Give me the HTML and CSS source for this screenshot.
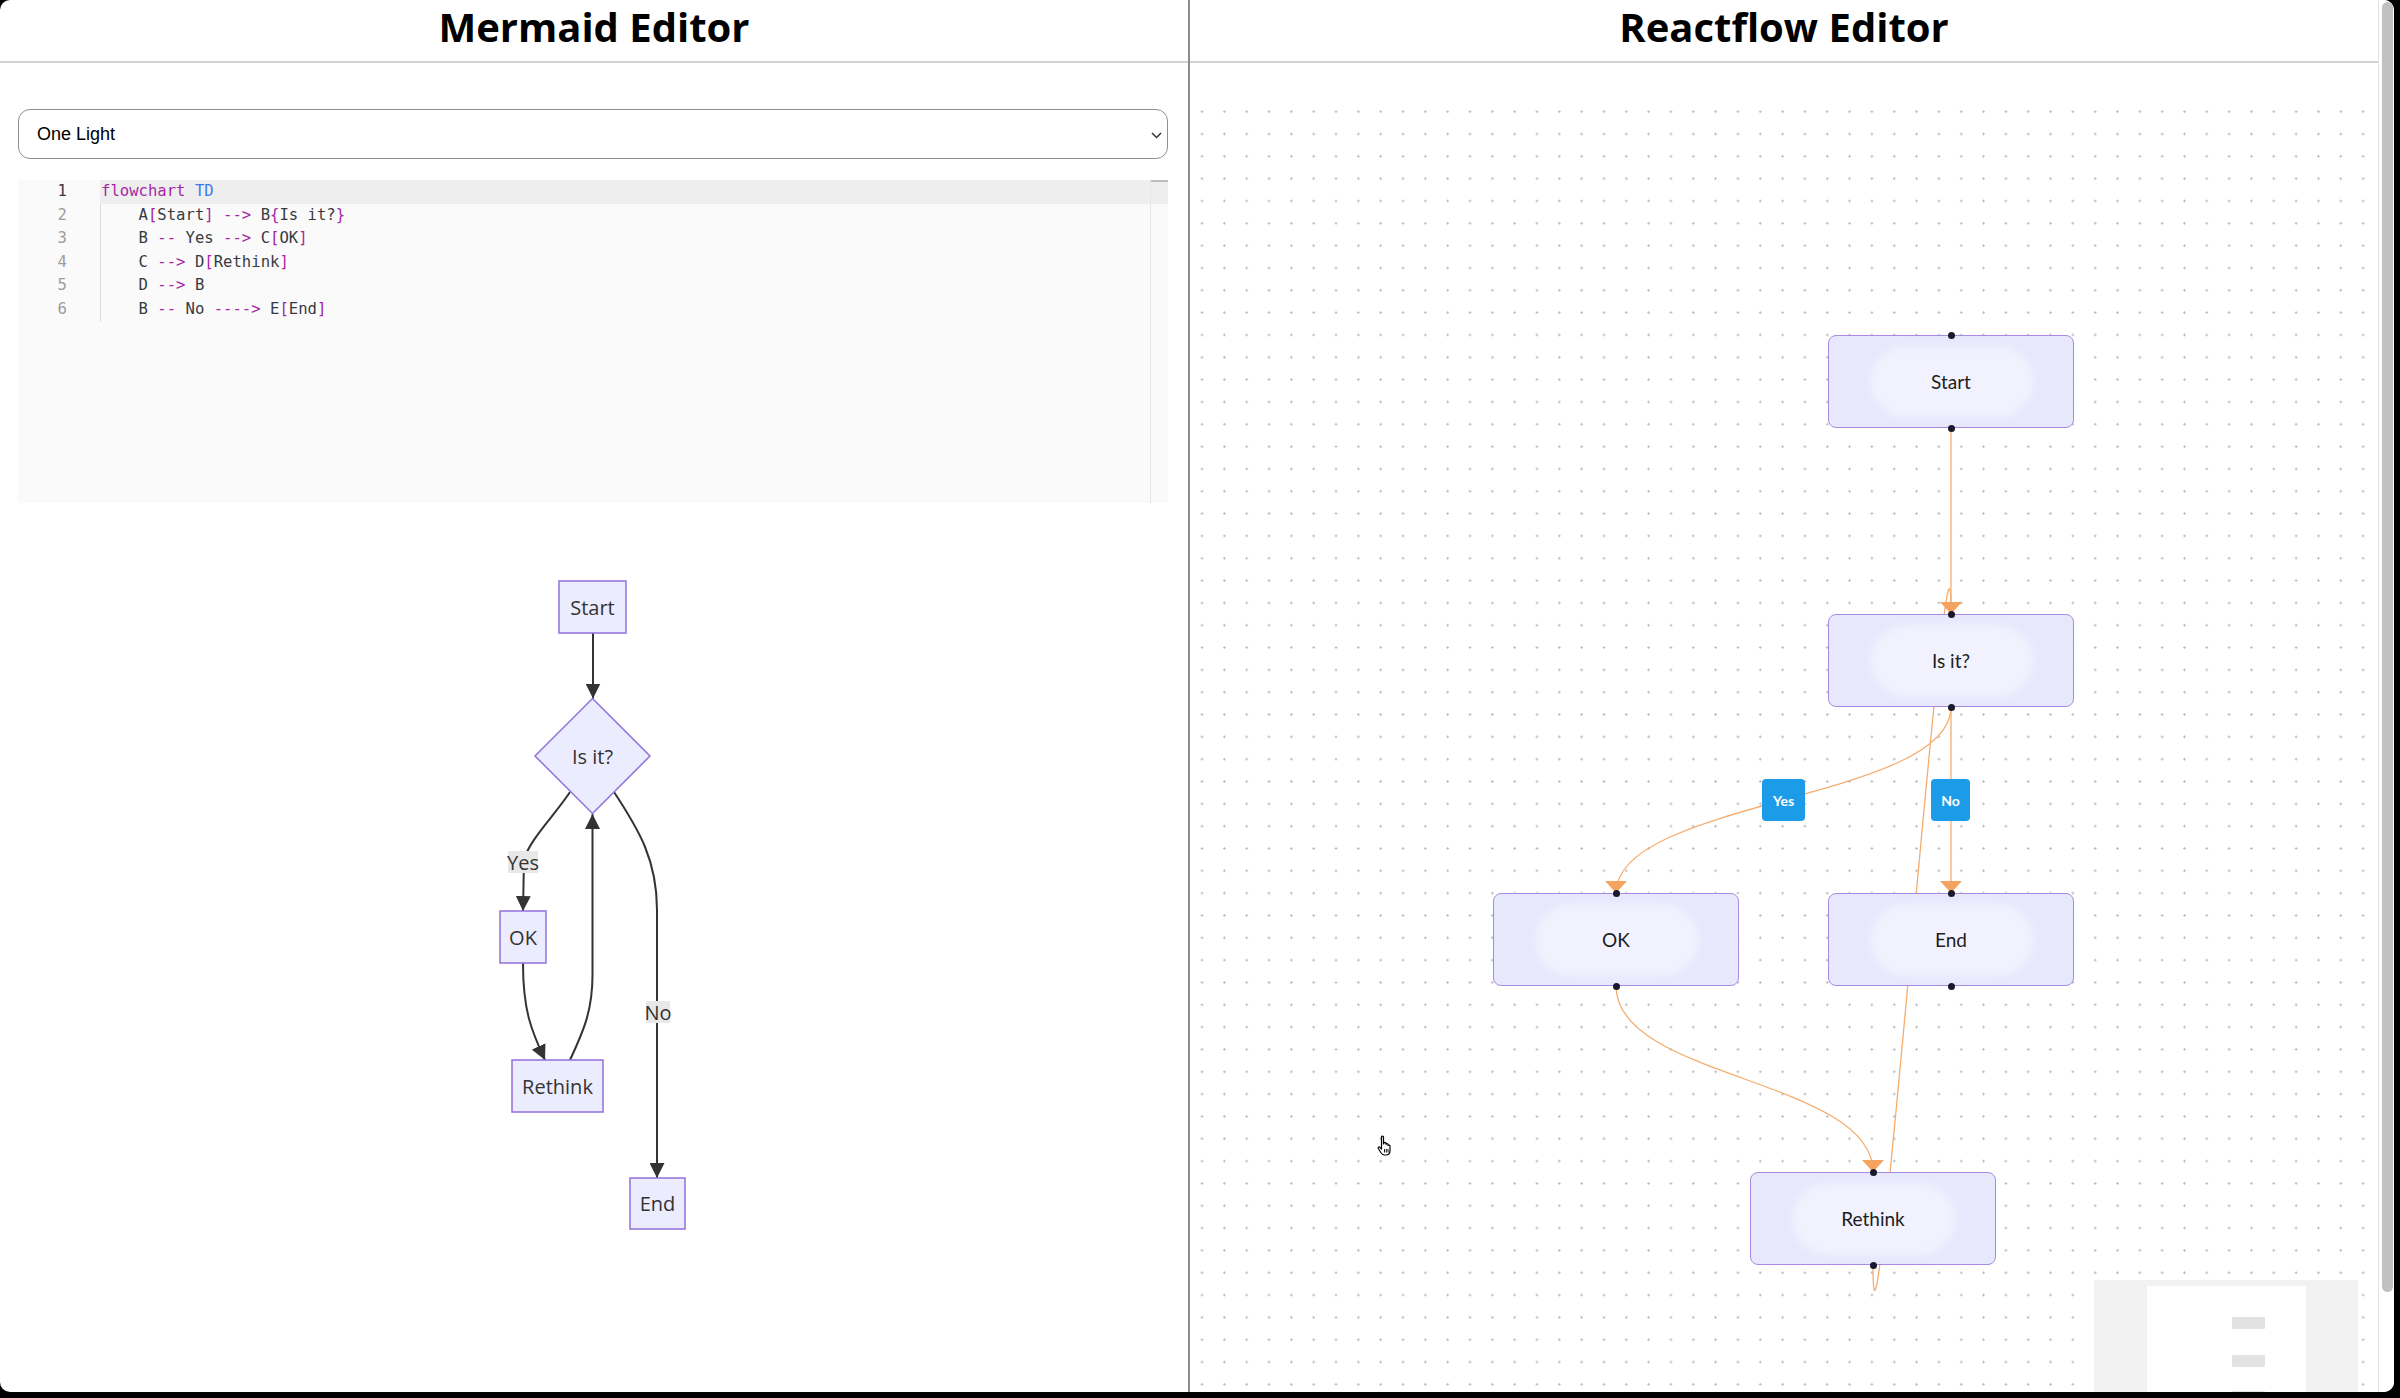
FILE: index.html
```html
<!DOCTYPE html>
<html lang="en">
<head>
  <meta charset="UTF-8">
  <title>Mermaid / Reactflow Editor</title>
  <link rel="stylesheet" href="styles.css">
</head>
<body>

  <div class="window">
    <div class="app">

      <section class="panel panel-left">
        <header class="panel-header"><h1>Mermaid Editor</h1></header>
        <div class="panel-body">
          <div class="theme-select">
            <span>One Light</span>
            <svg class="chevron" width="11" height="7" viewBox="0 0 11 7"><path d="M1 1 L5.5 5.5 L10 1" fill="none" stroke="#333" stroke-width="1.5"/></svg>
          </div>

          <div class="code-editor">
            <div class="gutter">
              <div class="ln active">1</div>
              <div class="ln">2</div>
              <div class="ln">3</div>
              <div class="ln">4</div>
              <div class="ln">5</div>
              <div class="ln">6</div>
            </div>
            <div class="code">
              <div class="line active"><span class="kw">flowchart</span> <span class="dir">TD</span></div>
              <div class="line indented">    A<span class="op">[</span>Start<span class="op">]</span> <span class="op">--&gt;</span> B<span class="op">{</span>Is it?<span class="op">}</span></div>
              <div class="line indented">    B <span class="op">--</span> Yes <span class="op">--&gt;</span> C<span class="op">[</span>OK<span class="op">]</span></div>
              <div class="line indented">    C <span class="op">--&gt;</span> D<span class="op">[</span>Rethink<span class="op">]</span></div>
              <div class="line indented">    D <span class="op">--&gt;</span> B</div>
              <div class="line indented">    B <span class="op">--</span> No <span class="op">----&gt;</span> E<span class="op">[</span>End<span class="op">]</span></div>
            </div>
            <div class="editor-scroll"><div class="editor-thumb"></div></div>
          </div>

          <svg class="mermaid-diagram" width="240" height="690" viewBox="474 560 240 690">
            <defs>
              <marker id="m-arrow" viewBox="0 0 10 10" refX="10" refY="5" markerUnits="userSpaceOnUse" markerWidth="15" markerHeight="15" orient="auto">
                <path d="M0,0 L10,5 L0,10 z" fill="#333"/>
              </marker>
            </defs>
            <g class="m-edges">
              <path d="M594,633 L594,698.5" marker-end="url(#m-arrow)"/>
              <path d="M571,792 C556,815 530,840 525,860 L524,911" marker-end="url(#m-arrow)"/>
              <path d="M524,963 C524,1010 532,1030 546,1060" marker-end="url(#m-arrow)"/>
              <path d="M571,1060 C585,1030 593.5,1010 593.5,975 L593.5,814" marker-end="url(#m-arrow)"/>
              <path d="M615,792 C640,830 658,860 658,910 L658,1178" marker-end="url(#m-arrow)"/>
            </g>
            <g class="m-labels">
              <rect x="509" y="851" width="30" height="22"/>
              <text x="524" y="862">Yes</text>
              <rect x="647" y="1001" width="24" height="22"/>
              <text x="659" y="1012">No</text>
            </g>
            <g class="m-nodes">
              <rect x="560" y="581" width="67" height="52"/>
              <text x="593.5" y="607">Start</text>
              <polygon points="593.5,698.5 651,756 593.5,813.5 536,756"/>
              <text x="593.5" y="756">Is it?</text>
              <rect x="501" y="911" width="46" height="52"/>
              <text x="524" y="937">OK</text>
              <rect x="513" y="1060" width="91" height="52"/>
              <text x="558.5" y="1086">Rethink</text>
              <rect x="631" y="1178" width="55" height="51"/>
              <text x="658.5" y="1203.5">End</text>
            </g>
          </svg>
        </div>
      </section>

      <section class="panel panel-right">
        <header class="panel-header"><h1>Reactflow Editor</h1></header>
        <div class="flow-canvas">
          <svg class="flow-edges" width="1188" height="1292">
            <path d="M761,328 L761,514"/>
            <path d="M761,607 C761,700 426,700 426,793"/>
            <path d="M761,607 L761,793"/>
            <path d="M426,886 C426,979 683,979 683,1072"/>
            <path d="M683,1165 C683,1365 761,314 761,514"/>
            <g class="flow-arrows">
              <polygon points="750,502 772,502 761,514"/>
              <polygon points="415,781 437,781 426,793"/>
              <polygon points="750,781 772,781 761,793"/>
              <polygon points="672,1060 694,1060 683,1072"/>
            </g>
          </svg>

          <div class="rf-node" style="left: 638px; top: 235px;">
            <div class="glow"></div><span>Start</span>
            <div class="handle top"></div><div class="handle bottom"></div>
          </div>
          <div class="rf-node" style="left: 638px; top: 514px;">
            <div class="glow"></div><span>Is it?</span>
            <div class="handle top"></div><div class="handle bottom"></div>
          </div>
          <div class="rf-node" style="left: 303px; top: 793px;">
            <div class="glow"></div><span>OK</span>
            <div class="handle top"></div><div class="handle bottom"></div>
          </div>
          <div class="rf-node" style="left: 638px; top: 793px;">
            <div class="glow"></div><span>End</span>
            <div class="handle top"></div><div class="handle bottom"></div>
          </div>
          <div class="rf-node" style="left: 560px; top: 1072px;">
            <div class="glow"></div><span>Rethink</span>
            <div class="handle top"></div><div class="handle bottom"></div>
          </div>

          <div class="edge-label" style="left: 572px; top: 679px; width: 43px;">Yes</div>
          <div class="edge-label" style="left: 741px; top: 679px; width: 39px;">No</div>

          <svg class="cursor" width="19" height="21" viewBox="0 0 19 21">
            <path d="M5.5 2 C5.5 0.8 7.5 0.8 7.5 2 L7.5 9 L8 8.2 C8.3 7 10 7 10 8.2 L10 9.3 C10.3 8.4 12 8.4 12 9.6 L12 10.5 C12.4 9.8 14 9.9 14 11 L14 15.5 C14 18 12.5 20 10 20 L8.5 20 C6.8 20 5.8 19 4.8 17.5 L2.3 13.5 C1.6 12.4 3 11.3 4 12.3 L5.5 14 Z" fill="#fff" stroke="#000" stroke-width="1.2" stroke-linejoin="round"/>
            <path d="M8.5 14 V17.5 M10.3 14 V17.5 M12 14 V17.5" stroke="#000" stroke-width="0.9"/>
          </svg>

          <div class="minimap">
            <svg width="264" height="150">
              <rect class="mm-view" x="53" y="6" width="159" height="200"/>
              <rect class="mm-node" x="138" y="37" width="33" height="12" rx="1"/>
              <rect class="mm-node" x="138" y="75" width="33" height="12" rx="1"/>
              <rect class="mm-node" x="138" y="111" width="33" height="12" rx="1"/>
            </svg>
          </div>
        </div>
      </section>

    </div>
    <div class="page-scrollbar"><div class="page-thumb"></div></div>
  </div>

</body>
</html>
```

FILE: styles.css
```css
* {
  box-sizing: border-box;
}

html, body {
  margin: 0;
  background: #000;
}

body {
  width: 2400px;
  height: 1398px;
  overflow: hidden;
}

.window {
  width: 2394px;
  height: 1392px;
  background: #fff;
  border-radius: 10px;
  overflow: hidden;
  display: flex;
}

.app {
  display: flex;
  flex: 1;
}

.panel {
  display: flex;
  flex-direction: column;
  height: 100%;
}

.panel-left {
  width: 1190px;
  border-right: 2px solid #8d8d8d;
}

.panel-right {
  width: 1189px;
  border-right: 1px solid #e3e3e3;
}

.panel-header {
  height: 63px;
  flex-shrink: 0;
  border-bottom: 2px solid #d3d3d3;
  display: flex;
  justify-content: center;
}

.panel-header h1 {
  margin: 0;
  font-family: "Open Sans", sans-serif;
  font-size: 40px;
  font-weight: 700;
  line-height: 53px;
  color: #000;
}

.panel-body {
  padding: 46px 20px 0 18px;
}

/* theme picker */
.theme-select {
  height: 50px;
  border: 1px solid #8f8f8f;
  border-radius: 12px;
  padding: 0 5px 0 18px;
  display: flex;
  align-items: center;
  justify-content: space-between;
  font-family: "Liberation Sans", Arial, sans-serif;
  font-size: 18px;
  color: #000;
}

.chevron {
  margin-top: 2px;
}

/* code editor */
.code-editor {
  margin-top: 21px;
  height: 323px;
  background: #fafafa;
  display: flex;
  font-family: "DejaVu Sans Mono", monospace;
  font-size: 15.6px;
  line-height: 23.6px;
}

.gutter {
  width: 82px;
  padding-right: 33px;
  text-align: right;
  color: #9d9d9f;
}

.gutter .ln.active {
  color: #383a42;
}

.code {
  flex: 1;
  color: #383a42;
}

.line {
  white-space: pre;
  padding-left: 1px;
}

.line.active {
  background: #eeeeee;
}

.line.indented {
  box-shadow: inset 1px 0 0 #dcdcdc;
}

.kw { color: #a626a4; }
.dir { color: #4078f2; }
.op { color: #a626a4; }

.editor-scroll {
  width: 18px;
  border-left: 1px solid #e6e6e6;
  background: linear-gradient(#eeeeee 23.6px, transparent 23.6px);
}

.editor-thumb {
  height: 2px;
  background: #bdbdbd;
}

/* mermaid output */
.mermaid-diagram {
  display: block;
  margin: 57px auto 0;
}

.m-edges path {
  fill: none;
  stroke: #333;
  stroke-width: 2;
}

.m-labels rect {
  fill: #e8e8e8;
}

.m-nodes rect,
.m-nodes polygon {
  fill: #ececff;
  stroke: #9370db;
  stroke-width: 1.5;
}

.mermaid-diagram text {
  font-family: "Open Sans", sans-serif;
  font-size: 20px;
  fill: #333;
  text-anchor: middle;
  dominant-baseline: central;
}

/* react flow canvas */
.flow-canvas {
  position: relative;
  margin-top: 37px;
  height: 1292px;
  overflow: hidden;
  background-image: radial-gradient(circle, #b9b9c0 0.9px, transparent 1.4px);
  background-size: 22.33px 22.33px;
  background-position: 0.9px 0.5px;
}

.flow-edges {
  position: absolute;
  left: 0;
  top: 0;
}

.flow-edges path {
  fill: none;
  stroke: #f4ad6f;
  stroke-width: 1.3;
}

.flow-arrows polygon {
  fill: #f4a460;
}

.rf-node {
  position: absolute;
  width: 246px;
  height: 93px;
  border: 1.5px solid #a78be3;
  border-radius: 8px;
  background: #e8e8fd;
  display: flex;
  align-items: center;
  justify-content: center;
  font-family: Lato, sans-serif;
  font-size: 19px;
  color: #1d1d1d;
}

.rf-node .glow {
  position: absolute;
  left: 42px;
  top: 11px;
  width: 162px;
  height: 70px;
  border-radius: 35px;
  background: rgba(255, 255, 255, 0.45);
  filter: blur(5px);
}

.rf-node span {
  position: relative;
}

.handle {
  position: absolute;
  left: 50%;
  width: 7px;
  height: 7px;
  margin-left: -3.5px;
  border-radius: 50%;
  background: #1a192b;
}

.handle.top { top: -4.5px; }
.handle.bottom { bottom: -4.5px; }

.edge-label {
  position: absolute;
  height: 42px;
  border-radius: 4px;
  background: #1c9be8;
  color: #fff;
  font-family: Lato, sans-serif;
  font-size: 14px;
  font-weight: 700;
  display: flex;
  align-items: center;
  justify-content: center;
}

.cursor {
  position: absolute;
  left: 186px;
  top: 1035px;
}

.minimap {
  position: absolute;
  left: 904px;
  top: 1180px;
  width: 264px;
  height: 150px;
  background: #f2f2f2;
}

.minimap svg {
  display: block;
}

.mm-view { fill: #fff; }
.mm-node { fill: #e2e2e2; }

/* page scrollbar */
.page-scrollbar {
  width: 15px;
  background: #fff;
  padding: 2px 1.5px 0 2.5px;
}

.page-thumb {
  height: 1290px;
  border-radius: 6px;
  background: #c1c1c1;
}
```
